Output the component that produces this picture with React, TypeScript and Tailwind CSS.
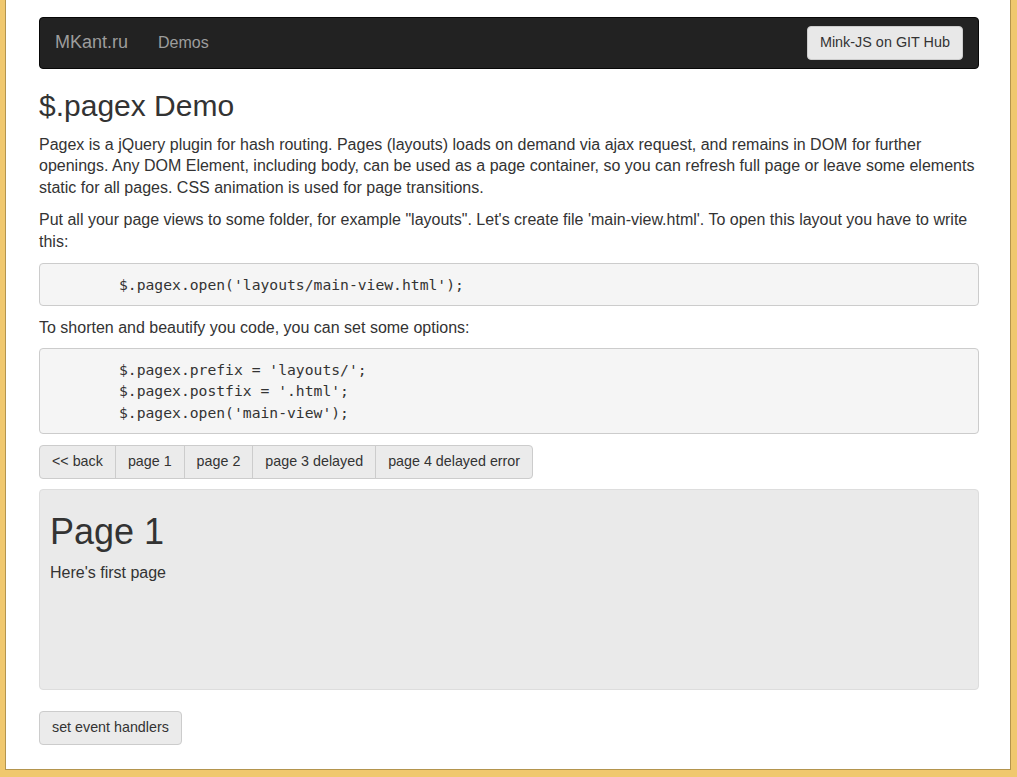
const pages = ['<< back', 'page 1', 'page 2', 'page 3 delayed', 'page 4 delayed error']

const App = () => {
  return (
    <div className="h-screen bg-[#f0c86e] pl-[5px] pr-[6px] pb-[7px] font-['Liberation_Sans',Arial,sans-serif] text-[#333]">
      <div className="h-full bg-white border-l border-r border-b border-[#b4954e] pt-[17px]">
        <div className="ml-[33px] w-[940px] text-[16px] leading-[21.4px]">
          <nav className="flex items-center h-[52px] bg-[#222] border border-[#080808] rounded px-[15px]">
            <span className="text-[18px] text-[#9d9d9d]">MKant.ru</span>
            <span className="ml-[30px] text-[16px] text-[#9d9d9d]">Demos</span>
            <button className="ml-auto h-[34px] px-[12px] text-[14.4px] text-[#333] bg-[#e8e8e8] border border-[#ccc] rounded">
              Mink-JS on GIT Hub
            </button>
          </nav>

          <h2 className="mt-[20px] mb-[12px] text-[30px] leading-[1.1]">$.pagex Demo</h2>
          <p className="whitespace-nowrap">
            Pagex is a jQuery plugin for hash routing. Pages (layouts) loads on demand via ajax request, and remains in DOM for further
            <br />
            openings. Any DOM Element, including body, can be used as a page container, so you can refresh full page or leave some elements
            <br />
            static for all pages. CSS animation is used for page transitions.
          </p>
          <p className="mt-[11px] whitespace-nowrap">
            Put all your page views to some folder, for example "layouts". Let's create file 'main-view.html'. To open this layout you have to write
            <br />
            this:
          </p>
          <pre className="mt-[11px] py-[10px] pl-[79px] bg-[#f5f5f5] border border-[#ccc] rounded font-['DejaVu_Sans_Mono',monospace] text-[14.7px] leading-[21.4px] text-[#333]">
            {"$.pagex.open('layouts/main-view.html');"}
          </pre>
          <p className="mt-[11px]">To shorten and beautify you code, you can set some options:</p>
          <pre className="mt-[9px] py-[10px] pl-[79px] bg-[#f5f5f5] border border-[#ccc] rounded font-['DejaVu_Sans_Mono',monospace] text-[14.7px] leading-[21.4px] text-[#333]">
            {"$.pagex.prefix = 'layouts/';\n$.pagex.postfix = '.html';\n$.pagex.open('main-view');"}
          </pre>

          <div className="mt-[11px] flex">
            {pages.map((p, i) => (
              <button
                key={p}
                className={
                  'h-[34px] px-[12px] text-[14.3px] text-[#333] bg-[#ebebeb] border border-[#ccc] ' +
                  (i === 0 ? 'rounded-l ' : '-ml-px ') +
                  (i === pages.length - 1 ? 'rounded-r' : '')
                }
              >
                {p}
              </button>
            ))}
          </div>

          <div className="mt-[10px] h-[201px] bg-[#eaeaea] border border-[#ddd] rounded px-[10px] pt-[22px]">
            <h1 className="text-[36px] leading-[1.1]">Page 1</h1>
            <p className="mt-[10px]">Here's first page</p>
          </div>

          <button className="mt-[21px] h-[34px] px-[12px] text-[14.3px] text-[#333] bg-[#ebebeb] border border-[#ccc] rounded">
            set event handlers
          </button>
        </div>
      </div>
    </div>
  )
}

export default App
